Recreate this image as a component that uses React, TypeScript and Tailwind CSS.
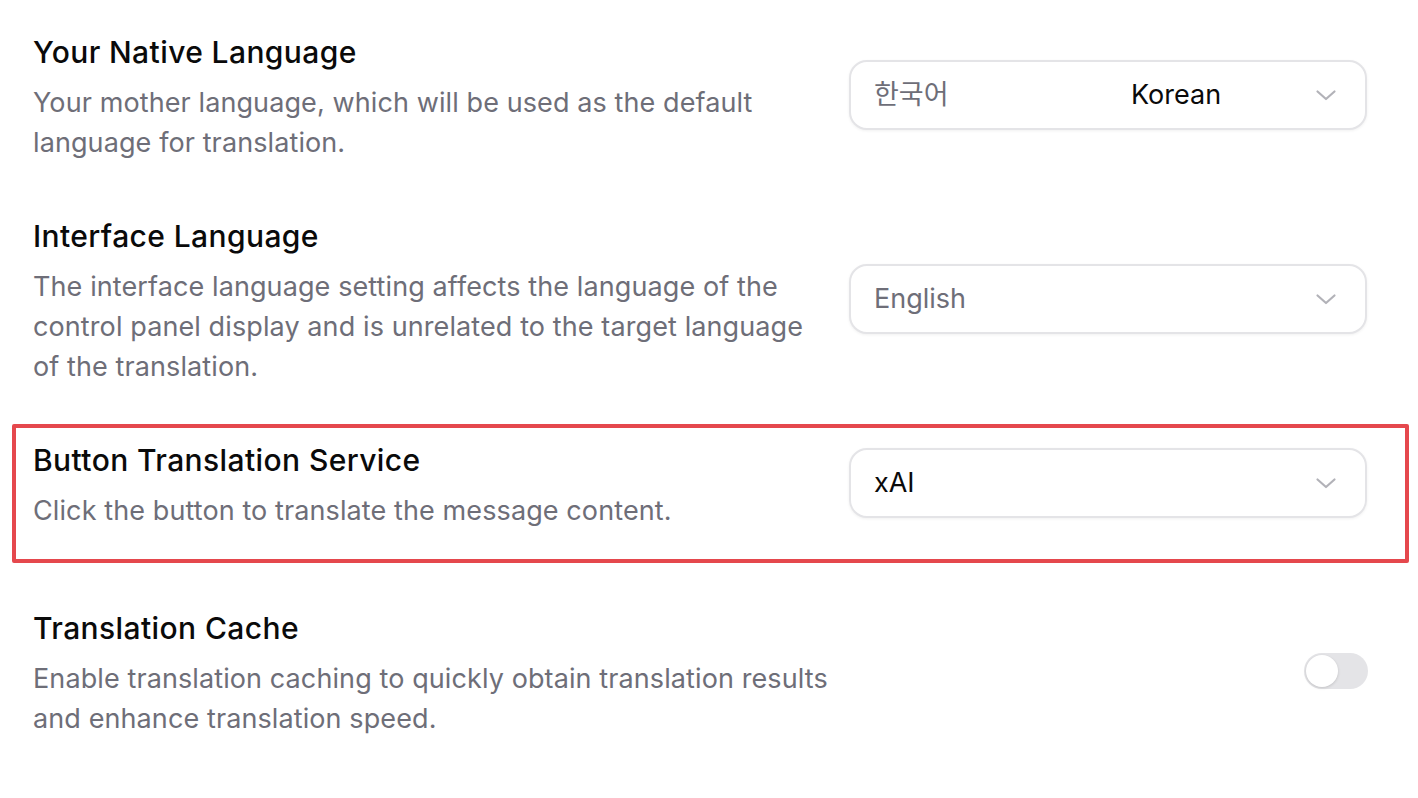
import React from "react";

const font = { fontFamily: "Inter, 'Noto Sans CJK KR', sans-serif" };

function Chevron() {
  return (
    <svg width="22" height="14" viewBox="0 0 22 14" fill="none" className="shrink-0">
      <path d="M2.5 3.5l8.5 7.5 8.5-7.5" stroke="#b2b2b8" strokeWidth="2.2" strokeLinecap="round" strokeLinejoin="round" />
    </svg>
  );
}

function Select({ children }: { children: React.ReactNode }) {
  return (
    <div className="w-[518px] h-[70px] mb-[5px] shrink-0 rounded-[18px] border-2 border-[#e4e4e7] bg-white shadow-[0_1px_3px_rgba(0,0,0,0.06)] flex items-center pl-[23px] pr-[28px]">
      <div className="flex-1 flex items-center text-[27px] leading-[40px]">{children}</div>
      <Chevron />
    </div>
  );
}

function Text({ title, desc }: { title: string; desc: React.ReactNode }) {
  return (
    <div className="flex-1">
      <div className="text-[30px] leading-[40px] font-medium tracking-[0.4px] text-[#0a0a0a] mb-[11px]">{title}</div>
      <div className="text-[27px] leading-[40px] tracking-[0.1px] text-[#6e6e78]">{desc}</div>
    </div>
  );
}

export default function App() {
  return (
    <div className="w-[1418px] h-[798px] bg-white pt-[32px]" style={font}>
      <div className="flex items-center pl-[33px] pr-[51px] gap-[16px]">
        <Text
          title="Your Native Language"
          desc={<>Your mother language, which will be used as the default<br />language for translation.</>}
        />
        <Select>
          <span className="w-[257px] text-[#6e6e78]">한국어</span>
          <span className="text-[#0a0a0a]">Korean</span>
        </Select>
      </div>

      <div className="flex items-center pl-[33px] pr-[51px] gap-[16px] mt-[53px]">
        <Text
          title="Interface Language"
          desc={<>The interface language setting affects the language of the<br />control panel display and is unrelated to the target language<br />of the translation.</>}
        />
        <Select>
          <span className="text-[#6e6e78]">English</span>
        </Select>
      </div>

      <div className="mt-[37px] ml-[12px] w-[1397px] border-4 border-[#e5484d] rounded-[2px] pt-[12px] pb-[28px] pl-[17px] pr-[38px]">
        <div className="flex items-center gap-[16px]">
          <Text title="Button Translation Service" desc="Click the button to translate the message content." />
          <Select>
            <span className="text-[#0a0a0a]">xAI</span>
          </Select>
        </div>
      </div>

      <div className="flex items-center pl-[33px] pr-[50px] gap-[16px] mt-[45px]">
        <Text
          title="Translation Cache"
          desc={<>Enable translation caching to quickly obtain translation results<br />and enhance translation speed.</>}
        />
        <div className="w-[64px] h-[36px] mb-[5px] rounded-full bg-[#e4e4e7] p-[2px] flex items-center shrink-0">
          <div className="w-[32px] h-[32px] rounded-full bg-white shadow-[0_1px_3px_rgba(0,0,0,0.15)]" />
        </div>
      </div>
    </div>
  );
}
